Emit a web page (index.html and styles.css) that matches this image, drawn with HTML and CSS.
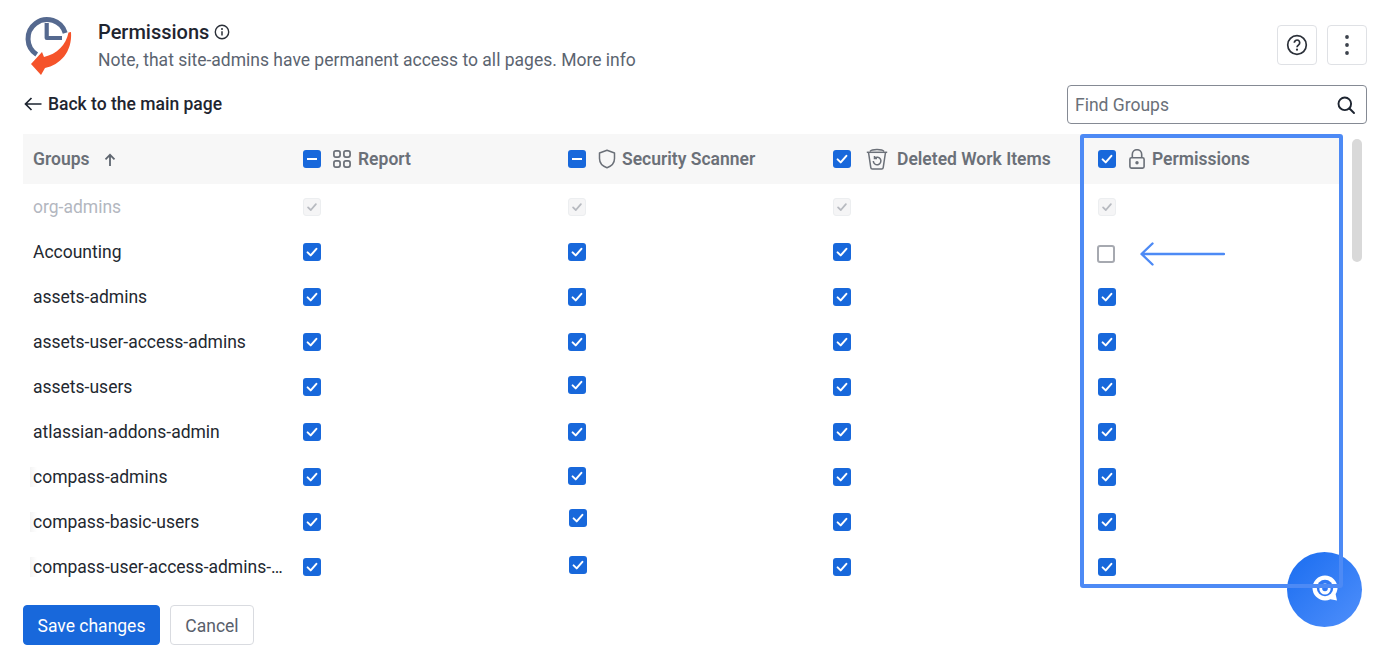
FILE: index.html
```html
<!DOCTYPE html>
<html lang="en">
<head>
<meta charset="utf-8">
<title>Permissions</title>
<link rel="stylesheet" href="styles.css">
</head>
<body>
<div class="page">
  <svg class="defs" width="0" height="0" aria-hidden="true">
    <symbol id="tick" viewBox="0 0 18 18"><path d="M4.6 9.4 7.7 12.4 13.4 5.8" fill="none" stroke="currentColor" stroke-width="2" stroke-linecap="round" stroke-linejoin="round"/></symbol>
  </svg>
  <header class="top">
    <svg class="logo" width="50" height="62" viewBox="0 0 50 62">
      <path d="M12.700 40.500A19 19 0 1 1 41.200 19" fill="none" stroke="#55698f" stroke-width="5"/>
      <path d="M22.700 9v15H38" fill="none" stroke="#55698f" stroke-width="4.200" stroke-linejoin="round"/>
      <path d="M47 18C48.500 38 36 51 21 54L17 61 7 50 18 38 20 43C33 40 42 31 44.500 18.500z" fill="#f5532a"/>
    </svg>
    <div class="headtext">
      <h1>Permissions
        <svg width="16" height="16" viewBox="0 0 16 16"><circle cx="8" cy="8" r="6.700" fill="none" stroke="#2b3039" stroke-width="1.400"/><path d="M8 7.200v4.300" stroke="#2b3039" stroke-width="1.500"/><circle cx="8" cy="4.900" r="1" fill="#2b3039"/></svg>
      </h1>
      <p>Note, that site-admins have permanent access to all pages. More info</p>
    </div>
    <div class="tools">
      <button class="tool" aria-label="Help">
        <svg width="22" height="22" viewBox="0 0 22 22"><circle cx="11" cy="11" r="9.300" fill="none" stroke="#2b3039" stroke-width="1.700"/><path d="M8.300 8.700a2.700 2.700 0 1 1 4.300 2.200c-1 .7-1.600 1.100-1.600 2.300" fill="none" stroke="#2b3039" stroke-width="1.700"/><circle cx="11" cy="15.700" r="1.100" fill="#2b3039"/></svg>
      </button>
      <button class="tool" aria-label="More">
        <svg width="6" height="22" viewBox="0 0 6 22"><circle cx="3" cy="3" r="1.900" fill="#3c424c"/><circle cx="3" cy="11" r="1.900" fill="#3c424c"/><circle cx="3" cy="19" r="1.900" fill="#3c424c"/></svg>
      </button>
    </div>
  </header>

  <div class="bar">
    <a class="back">
      <svg width="18" height="14" viewBox="0 0 18 14"><path d="M17.500 7H1.500M7.500 1 1.500 7l6 6" fill="none" stroke="#1d2430" stroke-width="1.700"/></svg>
      Back to the main page
    </a>
    <div class="search">
      <span>Find Groups</span>
      <svg width="20" height="20" viewBox="0 0 20 20"><circle cx="8.800" cy="8.800" r="6.300" fill="none" stroke="#1d2430" stroke-width="1.900"/><path d="M13.500 13.500 18 18" stroke="#1d2430" stroke-width="1.900" stroke-linecap="round"/></svg>
    </div>
  </div>

  <div class="tablewrap">
    <div class="table">
      <div class="row head">
        <div class="cell name">Groups
          <svg class="sort" width="12" height="14" viewBox="0 0 12 14"><path d="M6 13V2M1.500 6.300 6 1.800l4.500 4.500" fill="none" stroke="#5f6670" stroke-width="1.800"/></svg>
        </div>
        <div class="cell"><span class="cb on"><i class="dash"></i></span>
          <svg class="ci grid" width="18" height="18" viewBox="0 0 18 18"><g fill="none" stroke="#6b7078" stroke-width="1.700"><rect x=".9" y=".9" width="6.200" height="6.200" rx="2"/><rect x="10.900" y=".9" width="6.200" height="6.200" rx="2"/><rect x=".9" y="10.900" width="6.200" height="6.200" rx="2"/><rect x="10.900" y="10.900" width="6.200" height="6.200" rx="2"/></g></svg>Report</div>
        <div class="cell"><span class="cb on"><i class="dash"></i></span>
          <svg class="ci" width="20" height="20" viewBox="0 0 20 20"><path d="M10 1.300 17.500 4v5.500c0 4.500-3.100 7.700-7.500 9.200-4.400-1.500-7.500-4.700-7.500-9.200V4z" fill="none" stroke="#6b7078" stroke-width="1.500" stroke-linejoin="round"/></svg>Security Scanner</div>
        <div class="cell"><span class="cb on"><svg width="18" height="18"><use href="#tick"/></svg></span>
          <svg class="ci wide" width="22" height="22" viewBox="0 0 22 22"><g fill="none" stroke="#6b7078" stroke-width="1.500"><path d="M.8 4.300h20.400"/><path d="M4 3.400C6 1 16 1 18 3.400"/><path d="M2.600 5l2.200 14.700c.1.800.7 1.300 1.500 1.300h9.400c.8 0 1.400-.5 1.500-1.300L19.400 5"/><path d="M7.300 13a3.800 3.800 0 1 0 1.300-2.900"/><path d="M8.500 8v2.400h2.500"/></g></svg>Deleted Work Items</div>
        <div class="cell"><span class="cb on"><svg width="18" height="18"><use href="#tick"/></svg></span>
          <svg class="ci lock" width="16" height="20" viewBox="0 0 16 20"><g fill="none" stroke="#6b7078" stroke-width="1.600"><rect x=".9" y="8.800" width="14.200" height="10.300" rx="1.500"/><path d="M3.300 8.500V5.400a4.700 4.700 0 0 1 9.400 0v3.100"/></g><circle cx="8" cy="13.800" r="1.700" fill="#6b7078"/></svg>Permissions</div>
      </div>

      <div class="row">
        <div class="cell name muted">org-admins</div>
        <div class="cell"><span class="cb dis"><svg width="18" height="18"><use href="#tick"/></svg></span></div>
        <div class="cell"><span class="cb dis"><svg width="18" height="18"><use href="#tick"/></svg></span></div>
        <div class="cell"><span class="cb dis"><svg width="18" height="18"><use href="#tick"/></svg></span></div>
        <div class="cell"><span class="cb dis"><svg width="18" height="18"><use href="#tick"/></svg></span></div>
      </div>
      <div class="row">
        <div class="cell name">Accounting</div>
        <div class="cell"><span class="cb on"><svg width="18" height="18"><use href="#tick"/></svg></span></div>
        <div class="cell"><span class="cb on"><svg width="18" height="18"><use href="#tick"/></svg></span></div>
        <div class="cell"><span class="cb on"><svg width="18" height="18"><use href="#tick"/></svg></span></div>
        <div class="cell"><span class="cb off"></span>
          <svg class="pointer" width="86" height="26" viewBox="0 0 86 26"><path d="M85 13H3M13.500 2.500 2.500 13l11 10.500" fill="none" stroke="#4d8af5" stroke-width="2.400" stroke-linecap="round" stroke-linejoin="round"/></svg>
        </div>
      </div>
      <div class="row">
        <div class="cell name">assets-admins</div>
        <div class="cell"><span class="cb on"><svg width="18" height="18"><use href="#tick"/></svg></span></div>
        <div class="cell"><span class="cb on"><svg width="18" height="18"><use href="#tick"/></svg></span></div>
        <div class="cell"><span class="cb on"><svg width="18" height="18"><use href="#tick"/></svg></span></div>
        <div class="cell"><span class="cb on"><svg width="18" height="18"><use href="#tick"/></svg></span></div>
      </div>
      <div class="row">
        <div class="cell name">assets-user-access-admins</div>
        <div class="cell"><span class="cb on"><svg width="18" height="18"><use href="#tick"/></svg></span></div>
        <div class="cell"><span class="cb on"><svg width="18" height="18"><use href="#tick"/></svg></span></div>
        <div class="cell"><span class="cb on"><svg width="18" height="18"><use href="#tick"/></svg></span></div>
        <div class="cell"><span class="cb on"><svg width="18" height="18"><use href="#tick"/></svg></span></div>
      </div>
      <div class="row">
        <div class="cell name">assets-users</div>
        <div class="cell"><span class="cb on"><svg width="18" height="18"><use href="#tick"/></svg></span></div>
        <div class="cell"><span class="cb on up2"><svg width="18" height="18"><use href="#tick"/></svg></span></div>
        <div class="cell"><span class="cb on"><svg width="18" height="18"><use href="#tick"/></svg></span></div>
        <div class="cell"><span class="cb on"><svg width="18" height="18"><use href="#tick"/></svg></span></div>
      </div>
      <div class="row">
        <div class="cell name">atlassian-addons-admin</div>
        <div class="cell"><span class="cb on"><svg width="18" height="18"><use href="#tick"/></svg></span></div>
        <div class="cell"><span class="cb on"><svg width="18" height="18"><use href="#tick"/></svg></span></div>
        <div class="cell"><span class="cb on"><svg width="18" height="18"><use href="#tick"/></svg></span></div>
        <div class="cell"><span class="cb on"><svg width="18" height="18"><use href="#tick"/></svg></span></div>
      </div>
      <div class="row">
        <div class="cell name"><span class="fade">compass-admins</span></div>
        <div class="cell"><span class="cb on"><svg width="18" height="18"><use href="#tick"/></svg></span></div>
        <div class="cell"><span class="cb on up1"><svg width="18" height="18"><use href="#tick"/></svg></span></div>
        <div class="cell"><span class="cb on"><svg width="18" height="18"><use href="#tick"/></svg></span></div>
        <div class="cell"><span class="cb on"><svg width="18" height="18"><use href="#tick"/></svg></span></div>
      </div>
      <div class="row">
        <div class="cell name"><span class="fade">compass-basic-users</span></div>
        <div class="cell"><span class="cb on"><svg width="18" height="18"><use href="#tick"/></svg></span></div>
        <div class="cell"><span class="cb on up4"><svg width="18" height="18"><use href="#tick"/></svg></span></div>
        <div class="cell"><span class="cb on"><svg width="18" height="18"><use href="#tick"/></svg></span></div>
        <div class="cell"><span class="cb on"><svg width="18" height="18"><use href="#tick"/></svg></span></div>
      </div>
      <div class="row">
        <div class="cell name"><span class="fade">compass-user-access-admins-…</span></div>
        <div class="cell"><span class="cb on"><svg width="18" height="18"><use href="#tick"/></svg></span></div>
        <div class="cell"><span class="cb on up2r"><svg width="18" height="18"><use href="#tick"/></svg></span></div>
        <div class="cell"><span class="cb on"><svg width="18" height="18"><use href="#tick"/></svg></span></div>
        <div class="cell"><span class="cb on"><svg width="18" height="18"><use href="#tick"/></svg></span></div>
      </div>
    </div>
    <div class="scroll"><div class="thumb"></div></div>
    <div class="highlight"></div>
  </div>

  <footer class="actions">
    <button class="btn primary">Save changes</button>
    <button class="btn">Cancel</button>
  </footer>

  <div class="chat">
    <svg width="30" height="30" viewBox="0 0 30 30"><path d="M15 .5a12.500 12.500 0 1 0 0 25c2 0 3.800-.4 5.400-1.200l6.600 1.200-1.400-6.400c1.200-1.900 1.900-4 1.900-6.100A12.500 12.500 0 0 0 15 .5z" fill="#fff"/><circle cx="15" cy="13" r="8.200" fill="#2f78f4"/><circle cx="15" cy="14" r="5.600" fill="#fff"/><circle cx="15" cy="13.500" r="2.800" fill="#2f78f4"/></svg>
  </div>
</div>
</body>
</html>
```
FILE: styles.css
```css
* { box-sizing: border-box; }
html, body { margin: 0; height: 100%; background: #fff; }
body { font-family: Roboto, "Liberation Sans", sans-serif; color: #1f2530; overflow: hidden; }
.page { position: relative; width: 1381px; height: 655px; padding: 14px 14px 0 23px; }
.defs { position: absolute; }

.top { display: flex; align-items: flex-start; height: 62px; }
.logo { flex: none; margin-left: 1px; overflow: visible; }
.headtext { margin-left: 24px; padding-top: 7px; }
h1 { display: flex; align-items: center; gap: 5px; margin: 0; font-size: 20px; line-height: 22px; font-weight: 500; color: #1f2530; }
.headtext p { margin: 6px 0 0; font-size: 17.500px; line-height: 22px; color: #5b6470; }
.tools { display: flex; gap: 10px; margin-left: auto; padding-top: 11px; }
.tool { display: flex; align-items: center; justify-content: center; width: 40px; height: 40px; padding: 0; background: #fff; border: 1px solid #dfe1e5; border-radius: 4px; }

.bar { display: flex; align-items: flex-start; justify-content: space-between; height: 58px; padding-top: 9px; }
.back { display: flex; align-items: center; gap: 6px; margin: 8px 0 0 1px; font-size: 17.500px; line-height: 22px; font-weight: 500; color: #1f2530; }
.search { display: flex; align-items: center; justify-content: space-between; width: 300px; height: 39px; padding: 0 10px 0 7px; border: 1px solid #858a94; border-radius: 4px; font-size: 17.500px; color: #6a7079; }

.tablewrap { position: relative; display: flex; height: 455px; }
.table { width: 1317px; height: 455px; overflow: hidden; }
.row { display: grid; grid-template-columns: 270px 265px 265px 265px 252px; height: 45px; }
.row.head { height: 50px; background: #f7f7f7; }
.cell { display: flex; align-items: center; padding-left: 10px; font-size: 17.500px; color: #232830; white-space: nowrap; }
.head .cell { color: #6b7078; font-weight: 600; }
.sort { margin-left: 14px; margin-top: 1px; }
.muted { color: #b3b7bf; }
.fade { margin-left: -3px; padding-left: 3px; background: linear-gradient(to right, #f4f4f4, #fff 7px); }
.ci { margin: 0 5px 0 11px; flex: none; }
.ci.grid { margin: 0 7px 0 12px; }
.ci.wide { margin: 0 9px 0 15px; }
.ci.lock { margin: 0 7px 0 13px; }

.cb { display: flex; align-items: center; justify-content: center; flex: none; width: 18px; height: 18px; border-radius: 3px; }
.cb.on { background: #1868db; color: #fff; }
.cb.dis { background: #f5f5f6; border: 1px solid #eceef0; color: #b7bac0; }
.cb.off { background: #fff; border: 2px solid #a6a9b0; margin: 4px 0 0 -1px; }
.dash { display: block; width: 10px; height: 2.400px; background: #fff; }
.up1 { margin-top: -2px; }
.up2 { margin-top: -4px; }
.up2r { margin: -4px 0 0 1px; }
.up4 { margin: -8px 0 0 1px; }
.pointer { margin: 4px 0 0 24px; }

.scroll { margin-left: 12px; width: 10px; padding-top: 5px; }
.thumb { width: 10px; height: 123px; border-radius: 5px; background: #d9d9d9; }
.highlight { position: absolute; left: 1057px; top: 0; width: 263px; height: 454px; border: 4px solid #4d8af5; border-radius: 3px; z-index: 3; pointer-events: none; }

.actions { display: flex; gap: 10px; margin-top: 16px; }
.btn { width: 84px; height: 40px; padding: 1px 0 0; background: #fff; border: 1px solid #d9dbe0; border-radius: 4px; font: 400 17.500px Roboto, "Liberation Sans", sans-serif; color: #59606b; }
.btn.primary { width: 137px; background: #1868db; border-color: #1868db; color: #fff; }

.chat { position: absolute; left: 1287px; top: 552px; width: 75px; height: 75px; border-radius: 50%; background: linear-gradient(135deg, #1a6df0, #4f8ffb); display: flex; align-items: center; justify-content: center; z-index: 2; }
```
